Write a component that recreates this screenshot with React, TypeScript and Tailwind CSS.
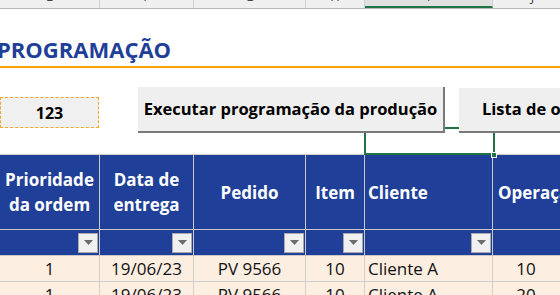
import React from "react";

const cols = [100, 94, 112, 59, 128, 80];
const letters = ["E", "F", "G", "H", "I", "J"];

function Dropdown() {
  return (
    <div className="w-[20px] h-[20px] bg-[#f0f0f0] border border-[#a9a9a9] flex items-center justify-center">
      <svg width="9" height="5" viewBox="0 0 9 5">
        <path d="M0 0 L9 0 L4.5 5 Z" fill="#6b6b6b" />
      </svg>
    </div>
  );
}

export default function App() {
  const headers: { t: React.ReactNode; align: string }[] = [
    { t: <>Prioridade<br />da ordem</>, align: "justify-center text-center" },
    { t: <>Data de<br />entrega</>, align: "justify-center text-center" },
    { t: "Pedido", align: "justify-center text-center" },
    { t: "Item", align: "justify-center text-center" },
    { t: "Cliente", align: "justify-start pl-[3px]" },
    { t: "Operação", align: "justify-start pl-[5px]" },
  ];
  const rows = [
    ["1", "19/06/23", "PV 9566", "10", "Cliente A", "10"],
    ["1", "19/06/23", "PV 9566", "10", "Cliente A", "20"],
  ];
  const filterCols = [true, true, true, true, true, false];
  return (
    <div
      className="relative w-[560px] h-[295px] overflow-hidden bg-white"
      style={{ fontFamily: '"Open Sans", sans-serif' }}
    >
      {/* column letters strip */}
      <div className="flex h-[9px] border-b border-[#b8b8b8] bg-[#efefef] overflow-hidden">
        {cols.map((w, i) => (
          <div
            key={i}
            style={{ width: w }}
            className={`shrink-0 h-full relative flex justify-center border-r border-[#d0d0d0] ${
              i === 4 ? "bg-[#e0e0e0] border-b-2 border-b-[#217346]" : ""
            }`}
          >
            <span className={`text-[13px] leading-[13px] mt-[-10px] ${i === 4 ? "text-[#217346]" : "text-[#444]"}`}>
              {letters[i]}
            </span>
          </div>
        ))}
      </div>

      {/* title */}
      <div className="h-[57px] flex items-start pt-[25px]">
        <h1 className="ml-[-3px] text-[22px] leading-[30px] font-bold text-[#1f3f98]">PROGRAMAÇÃO</h1>
      </div>
      <div className="h-[2px] bg-[#ffa500]" />

      {/* controls row */}
      <div className="flex items-start h-[86px]">
        <div className="mt-[29px] w-[99px] h-[31px] shrink-0 bg-[#f0f0f0] border border-dashed border-[#f5a623] flex items-center justify-center text-[16px] font-bold text-black">
          123
        </div>
        <button className="relative z-10 mt-[19px] ml-[39px] w-[307px] h-[46px] shrink-0 bg-[#efefef] border-r-2 border-b-2 border-[#7a7a7a] text-[16.5px] font-bold text-black flex items-center justify-center whitespace-nowrap">
          Executar programação da produção
        </button>
        <button className="relative z-10 mt-[20px] ml-[14px] w-[180px] h-[45px] shrink-0 bg-[#efefef] border-r-2 border-b-2 border-[#7a7a7a] text-[16.5px] font-bold text-black flex items-center justify-start pl-[23px] whitespace-nowrap">
          Lista de ordens
        </button>
      </div>

      {/* table */}
      <div className="border-t border-[#cfcfcf]">
        <div className="flex h-[75px] bg-[#1f3f98] border-b border-[#c8c8c8]">
          {headers.map((h, i) => (
            <div
              key={i}
              style={{ width: cols[i] }}
              className={`shrink-0 flex items-center ${h.align} border-r border-[#c8c8c8] text-white font-bold text-[17px] leading-[25px] whitespace-nowrap overflow-hidden`}
            >
              <span>{h.t}</span>
            </div>
          ))}
        </div>
        <div className="flex h-[26px] bg-[#1f3f98] border-b border-[#c8c8c8]">
          {cols.map((w, i) => (
            <div
              key={i}
              style={{ width: w }}
              className="shrink-0 flex items-center justify-end pr-[1px] border-r border-[#c8c8c8]"
            >
              {filterCols[i] && <Dropdown />}
            </div>
          ))}
        </div>
        {rows.map((r, ri) => (
          <div key={ri} className="flex h-[26px] bg-[#fdeee2] border-b border-[#cfcfcf]">
            {r.map((c, i) => (
              <div
                key={i}
                style={{ width: cols[i] }}
                className={`shrink-0 flex items-center border-r border-[#cfcfcf] text-[17px] text-[#111] whitespace-nowrap ${
                  i === 4 ? "justify-start pl-[3px]" : i === 5 ? "justify-center pr-[13px]" : "justify-center"
                }`}
              >
                {c}
              </div>
            ))}
          </div>
        ))}
      </div>

      {/* selected cell overlay */}
      <div className="absolute left-[364px] top-[127px] w-[131px] h-[28px] border-2 border-[#217346] pointer-events-none" />
      <div className="absolute left-[491px] top-[152px] w-[6px] h-[6px] bg-[#217346] border border-white" />
    </div>
  );
}
